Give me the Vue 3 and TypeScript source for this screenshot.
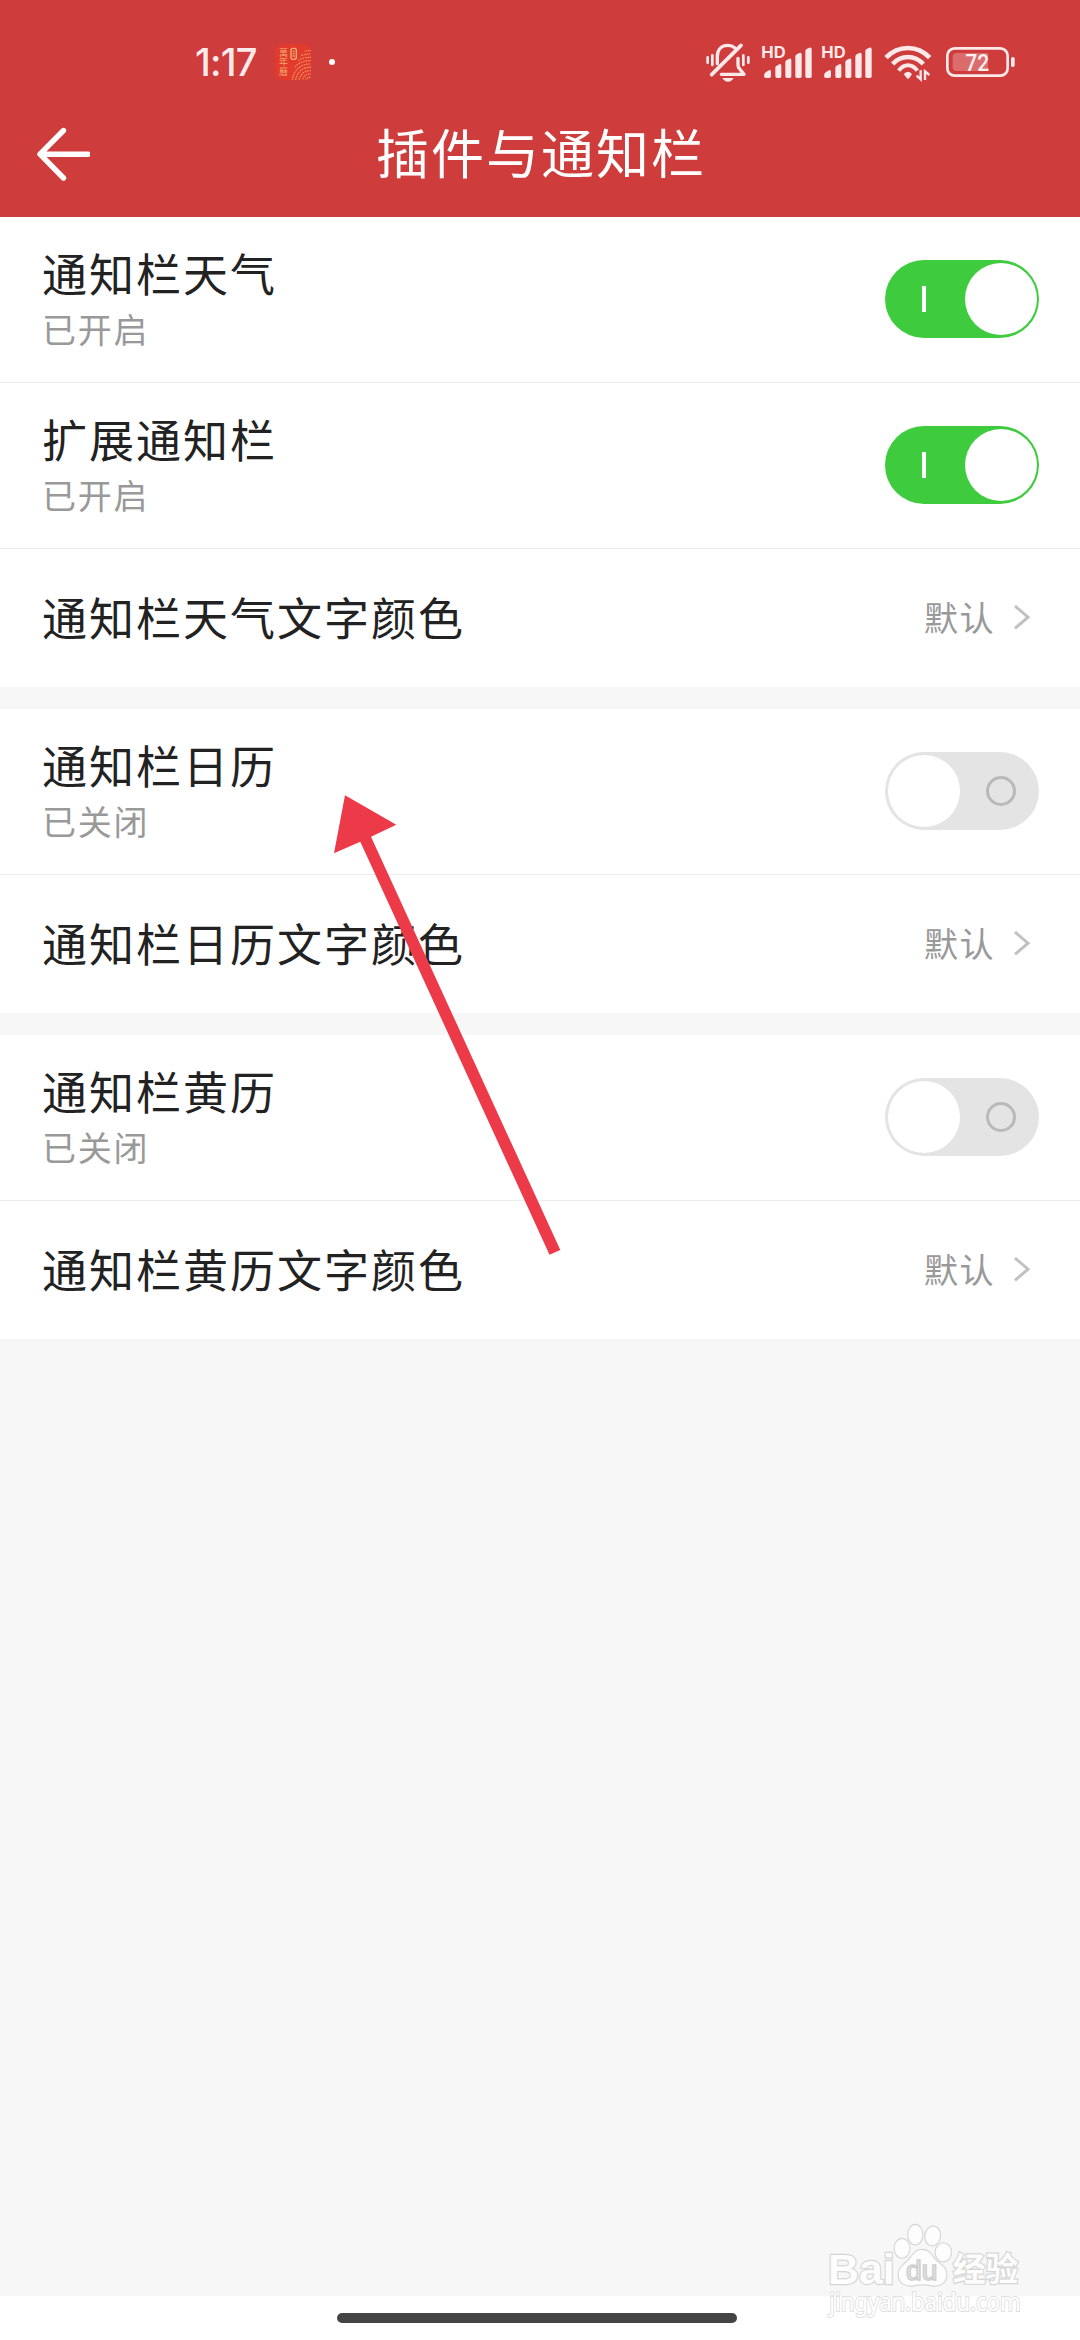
<script setup lang="ts">
import { ref } from 'vue'

interface ToggleRow {
  kind: 'toggle'
  title: string
  on: boolean
}

interface LinkRow {
  kind: 'link'
  title: string
  value: string
}

type Row = ToggleRow | LinkRow

const groups = ref<Row[][]>([
  [
    { kind: 'toggle', title: '通知栏天气', on: true },
    { kind: 'toggle', title: '扩展通知栏', on: true },
    { kind: 'link', title: '通知栏天气文字颜色', value: '默认' },
  ],
  [
    { kind: 'toggle', title: '通知栏日历', on: false },
    { kind: 'link', title: '通知栏日历文字颜色', value: '默认' },
  ],
  [
    { kind: 'toggle', title: '通知栏黄历', on: false },
    { kind: 'link', title: '通知栏黄历文字颜色', value: '默认' },
  ],
])

const ripples: number[] = [12, 22, 32, 42, 52, 62, 72, 82, 92]
const signals: string[] = ['sim1', 'sim2']
</script>

<template>
  <div class="screen">
    <header class="header">
      <div class="status">
        <span class="clock">1:17</span>
        <svg class="app-icon" viewBox="0 0 108 108">
          <defs>
            <clipPath id="hill"><path d="M46 108 Q58 62 78 34 Q94 10 108 12 V108 Z" /></clipPath>
          </defs>
          <rect width="108" height="108" rx="25" fill="#e23b2e" />
          <g clip-path="url(#hill)" fill="none" stroke="#eb9a63" stroke-width="3.4" stroke-dasharray="5 2.5">
            <circle v-for="r in ripples" :key="r" cx="104" cy="112" :r="r" />
          </g>
          <g fill="#f0a56c" font-size="27">
            <text x="12" y="35">萬</text>
            <text x="12" y="64">年</text>
            <text x="12" y="94">曆</text>
          </g>
          <rect x="48" y="13" width="16" height="33" rx="6" fill="none" stroke="#f0b070" stroke-width="4" />
          <path d="M53 22h6M53 29h6M53 36h6" stroke="#f0b070" stroke-width="4" />
        </svg>
        <i class="dot"></i>
        <div class="status-right">
          <svg width="46" height="70" viewBox="45 0 138 210" fill="none" stroke="#fde9ea" stroke-width="10" stroke-linecap="round" stroke-linejoin="round">
            <path d="M82 101V79C82 57 96 46 114 46C122 46 129 49 135 54" />
            <path d="M153 46L65 134" stroke-width="11" />
            <path d="M144 85V104Q144 111 149 117L162 133H94" />
            <path d="M97 144H131Q125 155 114 155Q103 155 97 144Z" fill="#fde9ea" stroke="none" />
            <path d="M53 82V98M67 76V105M160 76V105M175 82V98" stroke-width="8" />
          </svg>
          <svg v-for="(s, i) in signals" :key="s" width="52" height="70" viewBox="213 0 156 210" fill="#fde9ea" :class="{ second: i === 1 }">
            <text x="214" y="84" font-size="48" font-weight="700" textLength="73" lengthAdjust="spacingAndGlyphs" class="hd">HD</text>
            <path d="M222 138Q222 129 228 126L237 121Q243 118 243 126V138Q243 144 237 144H228Q222 144 222 138Z" />
            <path d="M256 139V113Q256 109 260 107L268 103Q274 100 274 108V139Q274 144 269 144H261Q256 144 256 139Z" />
            <path d="M286 139V97Q286 93 290 90L298 86Q304 83 304 91V139Q304 144 299 144H291Q286 144 286 139Z" />
            <path d="M316 139V80Q316 76 320 73L328 69Q335 66 335 74V139Q335 144 330 144H321Q316 144 316 139Z" />
            <path d="M346 139V63Q346 59 350 57L358 53Q365 50 365 58V139Q365 144 360 144H351Q346 144 346 139Z" />
          </svg>
          <svg class="wifi" width="48" height="70" viewBox="42 0 144 210" fill="none" stroke="#fde9ea" stroke-width="14">
            <path d="M48 83Q76 54 114 54Q151 54 179 83" />
            <path d="M68 102Q87 81 114 81Q140 81 160 102" />
            <path d="M86 122Q98 106 114 106Q130 106 142 122" stroke-width="12" />
            <path d="M101 133Q106 125 114 125Q122 125 126 133L117 145Q114 148 111 145Z" fill="#fde9ea" stroke="none" />
            <path d="M152 121V148L140 137M165 150V124L178 135" stroke-width="7" />
          </svg>
          <svg class="battery" width="71" height="70" viewBox="225 0 213 210">
            <rect x="232" y="55" width="181" height="82" rx="22" fill="none" stroke="#fde9ea" stroke-width="8" />
            <path d="M260 69H354V123H260Q248 123 248 111V81Q248 69 260 69Z" fill="#dc6b6b" />
            <rect x="423" y="81" width="11" height="30" rx="5" fill="#fde9ea" />
            <text x="286" y="123" font-size="72" font-weight="500" textLength="72" lengthAdjust="spacingAndGlyphs" fill="#fff1f1" class="level">72</text>
          </svg>
        </div>
      </div>
      <div class="nav">
        <svg class="back" width="60" height="60" viewBox="0 0 60 60" fill="none" stroke="#fff" stroke-width="5.4" stroke-linecap="round" stroke-linejoin="round">
          <path d="M33.5 6.5L10 30.2L33.5 54M11 30.2H58.2" />
        </svg>
        <h1>插件与通知栏</h1>
      </div>
    </header>

    <main class="content">
      <section v-for="(rows, g) in groups" :key="g" class="group">
        <div v-for="row in rows" :key="row.title" class="row" :class="row.kind">
          <div class="labels">
            <div class="title">{{ row.title }}</div>
            <div v-if="row.kind === 'toggle'" class="sub">{{ row.on ? '已开启' : '已关闭' }}</div>
          </div>
          <button v-if="row.kind === 'toggle'" class="switch" :class="{ on: row.on }" @click="row.on = !row.on">
            <i class="mark"></i><i class="knob"></i>
          </button>
          <div v-else class="value">
            <span>{{ row.value }}</span>
            <svg width="18" height="28" viewBox="0 0 18 28" fill="none" stroke="#c1c1c1" stroke-width="3">
              <path d="M2 3L15 14.2L2 25.4" />
            </svg>
          </div>
        </div>
      </section>
    </main>

    <footer class="gesture"><i></i></footer>

    <svg class="pointer" width="230" height="464" viewBox="332 793 230 464">
      <path d="M345 795.3L396.3 824.7L371 836.7L560.3 1250L549.5 1254.7L360.3 841.7L334 853.3Z" fill="#ec3a49" />
    </svg>

    <svg class="watermark" width="280" height="140" viewBox="0 0 840 420">
      <g class="ink">
        <text x="84" y="252" font-size="130" font-weight="700" textLength="200" lengthAdjust="spacingAndGlyphs">Bai</text>
        <ellipse cx="306" cy="145" rx="22" ry="28" />
        <ellipse cx="346" cy="104" rx="21" ry="29" />
        <ellipse cx="398" cy="108" rx="22" ry="28" transform="rotate(10 398 108)" />
        <ellipse cx="430" cy="157" rx="23" ry="27" />
        <path d="M366 150C394 150 397 176 415 188C432 200 440 209 439 227C437 250 417 259 397 256Q366 250 341 256C317 260 296 247 296 224C296 207 309 195 321 185C337 172 341 150 366 150Z" />
        <text x="318" y="240" font-size="82" textLength="94" lengthAdjust="spacingAndGlyphs" class="du">du</text>
        <text x="458" y="244" font-size="98" font-weight="700" textLength="197" lengthAdjust="spacingAndGlyphs" class="cjk">经验</text>
      </g>
      <text x="88" y="332" font-size="74" textLength="574" lengthAdjust="spacingAndGlyphs" class="url">jingyan.baidu.com</text>
    </svg>
  </div>
</template>

<style>
body {
  margin: 0;
}
</style>

<style scoped>
.screen {
  position: relative;
  display: flex;
  flex-direction: column;
  width: 1080px;
  height: 2340px;
  overflow: hidden;
  background: #f7f7f7;
  font-family: 'Noto Sans CJK SC', sans-serif;
}
.header {
  height: 217px;
  background: #cf3c3c;
  color: #fff;
}
.status {
  display: flex;
  align-items: center;
  height: 70px;
  padding: 30px 64px 0 195px;
}
.status svg {
  display: block;
}
.clock {
  width: 80px;
  margin-top: -6px;
  font: 500 38px/50px Inter, sans-serif;
  letter-spacing: -0.8px;
  color: #fdeaea;
}
.app-icon {
  width: 36px;
  height: 36px;
  margin-top: -6px;
}
.dot {
  width: 6px;
  height: 6px;
  margin: -6px 0 0 18px;
  border-radius: 50%;
  background: #fff;
}
.status-right {
  display: flex;
  gap: 10px;
  margin-left: auto;
}
.second {
  margin-left: -2px;
}
.wifi {
  margin-left: 1px;
}
.battery {
  margin-left: 3px;
}
.hd {
  font-family: Inter, sans-serif;
}
.level {
  font-family: Roboto, sans-serif;
}
.nav {
  display: flex;
  align-items: center;
  height: 107px;
  padding: 0 30px;
}
.back {
  flex: none;
}
h1 {
  flex: 1;
  margin: 0 60px 6px 2px;
  text-align: center;
  font-size: 53px;
  font-weight: 400;
  line-height: 80px;
  letter-spacing: 2px;
}
.content {
  display: flex;
  flex: 1;
  flex-direction: column;
  gap: 22px;
}
.group {
  background: #fff;
}
.row {
  display: flex;
  align-items: center;
  justify-content: space-between;
  box-sizing: border-box;
  padding: 0 41px 2px 42px;
}
.row.toggle {
  height: 166px;
  border-bottom: 1px solid #ececec;
}
.row.link {
  height: 138px;
  padding-right: 49px;
  padding-bottom: 3px;
}
.title {
  font-size: 45px;
  line-height: 60px;
  letter-spacing: 2px;
  color: #222;
}
.sub {
  font-size: 34px;
  line-height: 52px;
  letter-spacing: 1.8px;
  color: #999;
}
.switch {
  position: relative;
  width: 154px;
  height: 78px;
  padding: 0;
  border: 0;
  border-radius: 39px;
  background: #e4e4e4;
}
.knob {
  position: absolute;
  top: 3px;
  left: 3px;
  width: 72px;
  height: 72px;
  border-radius: 50%;
  background: #fff;
}
.mark {
  position: absolute;
  top: 24px;
  left: 101px;
  box-sizing: border-box;
  width: 30px;
  height: 30px;
  border: 3px solid #b9b9b9;
  border-radius: 50%;
}
.switch.on {
  background: #3ecc3e;
}
.switch.on .knob {
  left: 79.5px;
}
.switch.on .mark {
  top: 26px;
  left: 36.5px;
  width: 4px;
  height: 26px;
  border: 0;
  border-radius: 0;
  background: #fff;
}
.value {
  display: flex;
  align-items: center;
  gap: 18px;
  font-size: 34px;
  line-height: 52px;
  letter-spacing: 1.5px;
  color: #999;
}
.gesture {
  display: flex;
  align-items: center;
  justify-content: center;
  height: 44px;
  padding-right: 7px;
  background: #fff;
}
.gesture i {
  width: 400px;
  height: 10px;
  border-radius: 5px;
  background: #444;
}
.pointer {
  position: absolute;
  top: 793px;
  left: 332px;
}
.watermark {
  position: absolute;
  top: 2200px;
  left: 800px;
  font-family: 'Liberation Sans', sans-serif;
}
.watermark .ink {
  fill: #fdfdfd;
  stroke: #d6d6d6;
  stroke-width: 7px;
  paint-order: stroke;
}
.watermark .du {
  fill: #f4f4f4;
  stroke: #cfcfcf;
  stroke-width: 5px;
  paint-order: normal;
}
.watermark .cjk {
  font-family: 'Noto Sans CJK SC', sans-serif;
}
.watermark .url {
  fill: #fff;
  stroke: #e0e0e0;
  stroke-width: 6px;
  paint-order: stroke;
  font-family: 'Noto Sans', sans-serif;
}
</style>
